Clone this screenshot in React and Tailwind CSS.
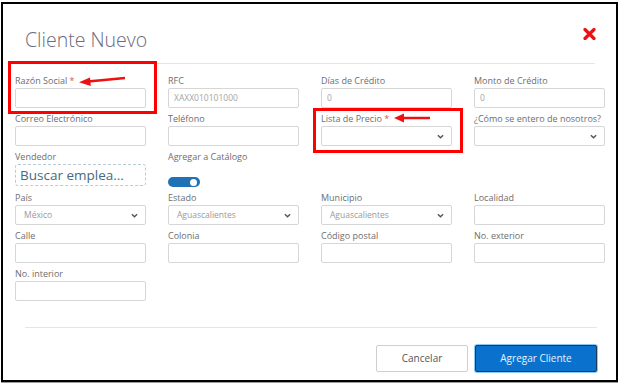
import React from 'react'

const font = { fontFamily: '"Open Sans", "Noto Sans", sans-serif' }

function Chevron() {
  return (
    <svg className="w-[7px] h-[5px] text-[#555]" viewBox="0 0 8 5" fill="none" stroke="currentColor" strokeWidth={1.6}>
      <path d="M1 1l3 3 3-3" />
    </svg>
  )
}

function Label({ text, required }) {
  return (
    <div className="h-[15px] leading-[15px] text-[9px] text-[#6e6e6e] whitespace-nowrap">
      {text}
      {required ? <span className="text-[#e05050]"> *</span> : null}
    </div>
  )
}

function Input({ value }) {
  return (
    <div className="h-[20px] rounded-[2px] border border-[#d6d6d6] bg-white flex items-center px-[5px] text-[8.5px] text-[#a5a5a5]">
      {value}
    </div>
  )
}

function Select({ value }) {
  return (
    <div className="h-[20px] rounded-[2px] border border-[#d6d6d6] bg-white flex items-center justify-between pl-[8px] pr-[7px] text-[8.5px] text-[#9a9a9a]">
      <span>{value}</span>
      <Chevron />
    </div>
  )
}

function Field({ label, required, children }) {
  return (
    <div className="flex flex-col">
      <Label text={label} required={required} />
      {children}
    </div>
  )
}

export default function App() {
  return (
    <div className="relative w-[621px] h-[384px] bg-white pt-[2px] pl-[1px]" style={font}>
      <div className="w-[617px] h-[380px] border-2 border-black bg-white shadow-[0_1px_0_#9a9a9a] flex flex-col">
        <div className="h-[59px] flex items-start justify-between pl-[22px] pr-[20px] pt-[22px]">
          <div className="text-[19.5px] leading-[28px] text-[#6b6b7c] font-light">Cliente Nuevo</div>
          <svg className="w-[13px] h-[12px] mt-[2px]" viewBox="0 0 13 12">
            <path d="M2 1.5l9 9M11 1.5l-9 9" stroke="#ee1111" strokeWidth={3.2} strokeLinecap="round" />
          </svg>
        </div>
        <div className="ml-[22px] w-[570px] h-px bg-[#e6e6e6]" />

        <div className="pl-[12px] pt-[9px] grid grid-cols-[131px_131px_131px_131px] gap-x-[22px] gap-y-[3px]">
          <Field label="Razón Social" required><Input /></Field>
          <Field label="RFC"><Input value="XAXX010101000" /></Field>
          <Field label="Días de Crédito"><Input value="0" /></Field>
          <Field label="Monto de Crédito"><Input value="0" /></Field>

          <Field label="Correo Electrónico"><Input /></Field>
          <Field label="Teléfono"><Input /></Field>
          <Field label="Lista de Precio" required><Select /></Field>
          <Field label="¿Cómo se entero de nosotros?"><Select /></Field>

          <Field label="Vendedor">
            <div className="h-[22px] rounded-[3px] border border-dashed border-[#b9ccd6] flex items-center pl-[4px] text-[13.5px] text-[#3f6c82] whitespace-nowrap">
              Buscar emplea...
            </div>
          </Field>
          <div className="flex flex-col">
            <Label text="Agregar a Catálogo" />
            <div className="mt-[13px] w-[32px] h-[10px] rounded-full bg-[#1f72b5] flex items-center justify-end pr-[3px]">
              <div className="w-[7px] h-[7px] rounded-full bg-white" />
            </div>
          </div>
          <div />
          <div />

          <Field label="País"><Select value="México" /></Field>
          <Field label="Estado"><Select value="Aguascalientes" /></Field>
          <Field label="Municipio"><Select value="Aguascalientes" /></Field>
          <Field label="Localidad"><Input /></Field>

          <Field label="Calle"><Input /></Field>
          <Field label="Colonia"><Input /></Field>
          <Field label="Código postal"><Input /></Field>
          <Field label="No. exterior"><Input /></Field>

          <Field label="No. interior"><Input /></Field>
        </div>

        <div className="ml-[22px] mt-[26px] w-[572px] h-px bg-[#e6e6e6]" />
        <div className="flex justify-end gap-[7px] pr-[19px] mt-[17px]">
          <button className="w-[92px] h-[27px] rounded-[2px] border border-[#cfcfcf] bg-white text-[10px] text-[#555]">
            Cancelar
          </button>
          <button className="w-[122px] h-[27px] rounded-[2px] border border-[#1d3a56] bg-[#0a72cc] text-[10px] text-[#e6f3ff] ring-1 ring-[#8cc8f2]">
            Agregar Cliente
          </button>
        </div>
      </div>

      <div className="absolute left-[8px] top-[61px] w-[149px] h-[53px] border-[3px] border-[#ff0000]" />
      <div className="absolute left-[313px] top-[108px] w-[150px] h-[45px] border-[3px] border-[#ff0000]" />
      <svg className="absolute left-0 top-0 w-[621px] h-[384px] pointer-events-none" viewBox="0 0 621 384">
        <path d="M125 78L88 81.5" stroke="#ee1111" strokeWidth={2.5} />
        <path d="M79 82.3L90 77.5L90.8 86Z" fill="#ee1111" />
        <path d="M430 118L402 118" stroke="#ee1111" strokeWidth={2.5} />
        <path d="M394 118L404 113.5L404 122.5Z" fill="#ee1111" />
      </svg>
    </div>
  )
}
